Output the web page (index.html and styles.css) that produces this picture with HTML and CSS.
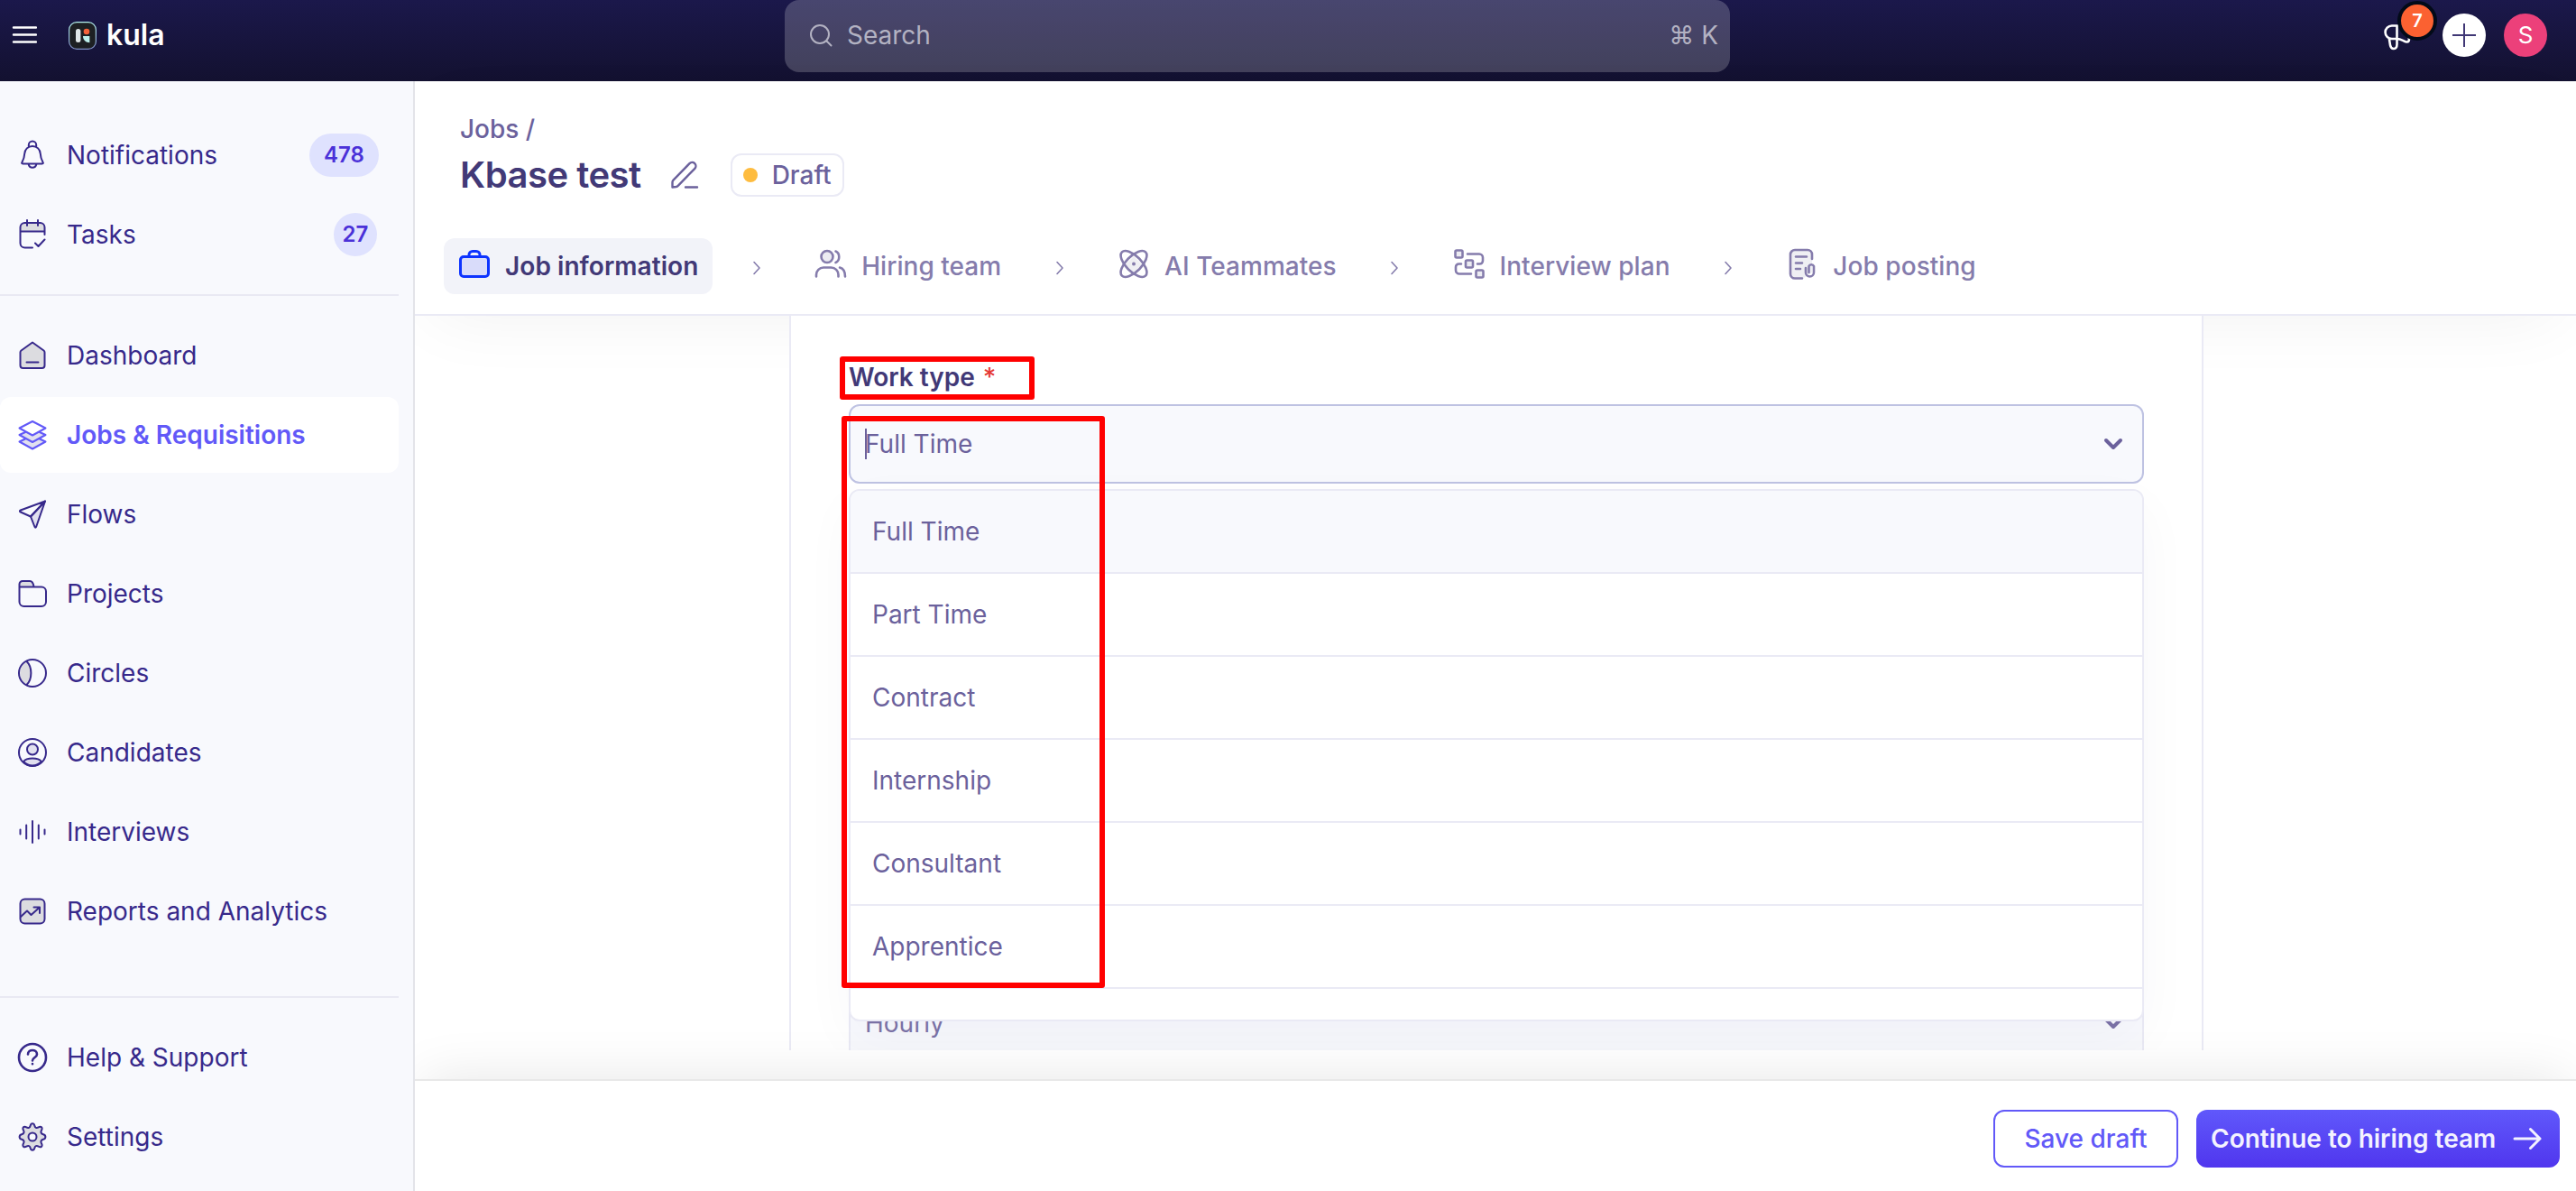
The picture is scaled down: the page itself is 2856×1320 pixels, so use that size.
FILE: index.html
```html
<!DOCTYPE html>
<html lang="en">
<head>
    <meta charset="UTF-8">
    <meta name="viewport" content="width=device-width, initial-scale=1.0">
    <title>Kbase test - Job information</title>

    <link rel="stylesheet" href="styles.css">
</head>
<body>
    <!-- Top Bar -->
    <header class="topbar">
        <div class="brand">
            <svg class="menu-icon" width="28" height="24" viewBox="0 0 28 24"><path d="M2 3.5h25M2 11.5h25M2 19.5h25"/></svg>
            <svg class="logo" width="31" height="31" viewBox="0 0 31 31">
                <defs>
                    <linearGradient id="ring" x1="0" y1="0" x2="0" y2="1">
                        <stop offset="0" stop-color="#b5f3f0"/>
                        <stop offset="1" stop-color="#7f8fc8"/>
                    </linearGradient>
                </defs>
                <rect x=".6" y=".6" width="29.8" height="29.8" rx="8.5" fill="#1d2023" stroke="url(#ring)" stroke-width="1.2"/>
                <rect x="8" y="8" width="5.4" height="15" rx="2.5" fill="#dfe6e8"/>
                <circle cx="20" cy="11" r="3.3" fill="#f4623a"/>
                <path d="M16 16h7.4v7.2c-4 0-7.4-2.600-7.400-7.200z" fill="#bdf0ec"/>
            </svg>
            <span class="brand-name">kula</span>
        </div>
        <div class="search">
            <svg width="26" height="26" viewBox="0 0 26 26"><circle cx="12" cy="12" r="10"/><path d="M19.500 19.500l5 5"/></svg>
            <span class="search-text">Search</span>
            <span class="shortcut">⌘ K</span>
        </div>
        <div class="actions">
            <div class="announce">
                <svg width="32" height="32" viewBox="0 0 32 32"><path d="M15.500 2.500H9.800a7.200 7.200 0 0 0 0 14.500h5.700zM15.500 17v6c0 6.500-6.500 6.500-7.500 1L6.800 16.500M15.500 17c5 0 7 3 10.500 3.500 2.500.3 3.300-1.500 2.800-4M15.500 2.500c4 0 6-1 8-2.500"/></svg>
                <span class="count">7</span>
            </div>
            <div class="circle plus">
                <svg width="26" height="26" viewBox="0 0 26 26"><path d="M13 .5v25M.5 13h25"/></svg>
            </div>
            <div class="circle avatar">S</div>
        </div>
    </header>

    <div class="page">
        <!-- Sidebar Menu -->
        <nav class="sidebar">
            <ul>
                <li>
                    <svg class="icon" viewBox="0 0 36 36"><path d="M13.800 9V6.800a4.200 4.200 0 0 1 8.400 0V9M18 8c-5 0-8.500 3.500-8.800 8.500-.2 4.500-1.200 6.500-2.700 9.200-.8 1.400-.3 1.700.7 1.700h21.600c1 0 1.500-.3.7-1.700-1.500-2.700-2.500-4.700-2.700-9.200C26.500 11.500 23 8 18 8zM13.600 28c.6 2.500 2.200 3.800 4.400 3.800s3.800-1.300 4.400-3.800"/></svg>
                    <span>Notifications</span>
                    <span class="badge">478</span>
                </li>
                <li>
                    <svg class="icon" viewBox="0 0 36 36"><path class="shade" d="M4.500 14.500V10a5 5 0 0 1 5-5h17a5 5 0 0 1 5 5v4.500z"/><path d="M18 32.500H9.500a5 5 0 0 1-5-5V10a5 5 0 0 1 5-5h17a5 5 0 0 1 5 5v8M4.500 14.500h27M12 2v6M24 2v6M21 27.500l3.500 3.500 7-7.500"/></svg>
                    <span>Tasks</span>
                    <span class="badge round">27</span>
                </li>
            </ul>
            <hr>
            <ul class="main-links">
                <li>
                    <svg class="icon" viewBox="0 0 36 36"><path class="shade" d="M18 3.500L5.500 12.500a2.500 2.500 0 0 0-1 2V29a3 3 0 0 0 3 3h21a3 3 0 0 0 3-3V14.500a2.500 2.500 0 0 0-1-2z"/><path d="M18 3.500L5.500 12.500a2.500 2.500 0 0 0-1 2V29a3 3 0 0 0 3 3h21a3 3 0 0 0 3-3V14.500a2.500 2.500 0 0 0-1-2zM11.500 25.500h13"/></svg>
                    <span>Dashboard</span>
                </li>
                <li class="active">
                    <svg class="icon" viewBox="0 0 36 36"><path d="M10 22.500l-6.500 3L18 33.500l14.500-8-6.500-3" class="tint"/><path d="M10 15l-6.500 3L18 26l14.500-8-6.500-3" class="tint"/><path d="M18 3L3.500 10.500 18 18.500l14.500-8z" class="white"/></svg>
                    <span>Jobs &amp; Requisitions</span>
                </li>
                <li>
                    <svg class="icon" viewBox="0 0 36 36"><path class="tint" d="M32 3.500L16 20.500 20.500 32c.4 1 1.200 1 1.600 0z"/><path d="M32 3.500L4.800 13.500c-1.200.5-1.200 1.500 0 2L16 20.500zM32 3.500L16 20.500"/></svg>
                    <span>Flows</span>
                </li>
                <li>
                    <svg class="icon" viewBox="0 0 36 36"><path class="shade" d="M3.500 11V7.500a3.500 3.500 0 0 1 3.500-3.500h8c3 0 4.500 3 4.800 7z"/><path d="M3.500 11V7.500a3.500 3.500 0 0 1 3.500-3.500h8c2.500 0 4 2.500 4.600 6.500M3.500 10.500H28a5 5 0 0 1 5 5V27a5 5 0 0 1-5 5H8.500a5 5 0 0 1-5-5z"/></svg>
                    <span>Projects</span>
                </li>
                <li>
                    <svg class="icon" viewBox="0 0 36 36"><path class="shade" d="M11.500 5.500c6.500 6 6.500 19 0 25-9.500-5-9.500-20 0-25z"/><circle cx="18" cy="18" r="15"/><path d="M11.500 5c6.500 6 6.500 20 0 26"/></svg>
                    <span>Circles</span>
                </li>
                <li>
                    <svg class="icon" viewBox="0 0 36 36"><path class="tint" d="M8 28c2-2.700 5-3.500 10-3.500s8 .8 10 3.500c-5 6-15 6-20 0z"/><circle class="tint" cx="18" cy="14.500" r="6"/><circle cx="18" cy="18" r="15"/></svg>
                    <span>Candidates</span>
                </li>
                <li>
                    <svg class="icon" viewBox="0 0 36 36"><path d="M4.500 15.500v5M11.200 10.500v15M18 6v24M24.800 10.500v15M31.500 15.500v5"/></svg>
                    <span>Interviews</span>
                </li>
                <li>
                    <svg class="icon" viewBox="0 0 36 36"><rect class="shade" x="4.500" y="4.500" width="27" height="27" rx="5"/><rect x="4.500" y="4.500" width="27" height="27" rx="5"/><path d="M5 24l7-6.500 4.500 4.500L25.500 14M19.500 13.500H26V20"/></svg>
                    <span>Reports and Analytics</span>
                </li>
            </ul>
            <hr>
            <ul class="bottom-links">
                <li>
                    <svg class="icon bold" viewBox="0 0 36 36"><circle cx="18" cy="18" r="15"/><path d="M13 14.500c0-6 10-6 10 0 0 3.500-5 3.500-5 7M18 25v.2"/></svg>
                    <span>Help &amp; Support</span>
                </li>
                <li>
                    <svg class="icon" viewBox="0 0 36 36"><path class="gear" d="M15.700 5.500c.7-3 3.900-3 4.600 0 .5 2.400 2.300 3.200 4.400 1.900 2.800-1.700 4.900.4 3.300 3.300-1.200 2.100-.4 3.900 2 4.500 3.200.8 3.200 4.800 0 5.600-2.400.6-3.200 2.400-2 4.500 1.600 2.900-.5 5-3.300 3.300-2.100-1.300-3.900-.5-4.400 1.900-.7 3-3.900 3-4.600 0-.5-2.400-2.300-3.200-4.400-1.900-2.800 1.700-4.900-.4-3.300-3.300 1.200-2.100.4-3.900-2-4.500-3.200-.8-3.200-4.800 0-5.600 2.400-.6 3.200-2.400 2-4.500-1.600-2.900.5-5 3.300-3.300 2.100 1.300 3.900.5 4.400-1.900z"/><circle cx="18" cy="18" r="4.500" class="hole"/></svg>
                    <span>Settings</span>
                </li>
            </ul>
        </nav>

        <main class="content">
            <!-- Job Header -->
            <section class="job-header">
                <div class="breadcrumb">Jobs /</div>
                <div class="title-row">
                    <h1>Kbase test</h1>
                    <svg class="edit" width="32" height="32" viewBox="0 0 32 32"><path d="M2.500 29.500v-5.500c0-1 .2-1.500 1-2.300L21.500 3.200a4 4 0 0 1 5.800 5.600L9 27.600c-.8.8-1.300 1.200-2.300 1.400zM17 29.500h13"/></svg>
                    <span class="status"><i></i>Draft</span>
                </div>
                <div class="steps">
                    <div class="step current">
                        <svg viewBox="0 0 36 36"><rect class="fill" x="2.500" y="9.500" width="31" height="22" rx="3.500"/><path d="M12 9V7.500a4 4 0 0 1 4-4h4a4 4 0 0 1 4 4V9"/></svg>
                        <span>Job information</span>
                    </div>
                    <svg class="arrow" width="10" height="16" viewBox="0 0 10 16"><path d="M2 1.500l6 6.500-6 6.500"/></svg>
                    <div class="step">
                        <svg viewBox="0 0 36 36"><circle class="fill" cx="14" cy="9.500" r="6.500"/><path d="M2 31.500v-2a8 8 0 0 1 8-8h8.500a8 8 0 0 1 8 8v2M23.500 3.500c5 2 5 10.500 0 12.500M28 21.500c4 1 6 4 6 10"/></svg>
                        <span>Hiring team</span>
                    </div>
                    <svg class="arrow" width="10" height="16" viewBox="0 0 10 16"><path d="M2 1.500l6 6.500-6 6.500"/></svg>
                    <div class="step">
                        <svg viewBox="0 0 36 36"><path class="soft" d="M18 9l9 9-9 9-9-9z"/><ellipse cx="18" cy="17.500" rx="18.500" ry="8.500" transform="rotate(45 18 17.500)"/><ellipse cx="18" cy="17.500" rx="18.500" ry="8.500" transform="rotate(-45 18 17.500)"/><path d="M18 17.400v.2" class="dot"/></svg>
                        <span>AI Teammates</span>
                    </div>
                    <svg class="arrow" width="10" height="16" viewBox="0 0 10 16"><path d="M2 1.500l6 6.500-6 6.500"/></svg>
                    <div class="step">
                        <svg viewBox="0 0 36 36"><rect class="fill" x="2.500" y="2.500" width="8" height="8" rx="1.500"/><rect class="fill" x="14" y="13.500" width="8" height="8" rx="1.500"/><rect class="fill" x="25.500" y="24.500" width="8" height="8" rx="1.500"/><path d="M16 6.500h13a4 4 0 0 1 4 4v3.500a3.500 3.500 0 0 1-3.500 3.500H27M9 17.500H6.500a3.500 3.500 0 0 0-3.500 3.500v3.500a4 4 0 0 0 4 4h13"/></svg>
                        <span>Interview plan</span>
                    </div>
                    <svg class="arrow" width="10" height="16" viewBox="0 0 10 16"><path d="M2 1.500l6 6.500-6 6.500"/></svg>
                    <div class="step">
                        <svg viewBox="0 0 36 36"><path class="soft" d="M5 7a5 5 0 0 1 5-5h14a5 5 0 0 1 5 5v20l-9 6H10a5 5 0 0 1-5-5z"/><path d="M18 33.500h-8a5 5 0 0 1-5-5V7a5 5 0 0 1 5-5h14a5 5 0 0 1 5 5v5M11 9.500h12M11 16.500h7M11 23h5M22 22v5a4.500 4.500 0 0 0 9 0v-7a3 3 0 0 0-5.500 0v7"/></svg>
                        <span>Job posting</span>
                    </div>
                </div>
            </section>

            <!-- Form -->
            <section class="form-area">
                <div class="card">
                    <div class="work-type">
                        <label>Work type <em>*</em></label>
                        <div class="select focused">
                            <span class="caret"></span>
                            <span>Full Time</span>
                            <svg width="22" height="14" viewBox="0 0 22 14"><path d="M3 3l8 8 8-8"/></svg>
                        </div>
                        <ul class="options">
                            <li class="hovered">Full Time</li>
                            <li>Part Time</li>
                            <li>Contract</li>
                            <li>Internship</li>
                            <li>Consultant</li>
                            <li>Apprentice</li>
                        </ul>
                        <div class="mark mark-label"></div>
                        <div class="mark mark-options"></div>
                    </div>
                    <div class="select pay">
                        <span>Hourly</span>
                        <svg width="22" height="14" viewBox="0 0 22 14"><path d="M3 3l8 8 8-8"/></svg>
                    </div>
                </div>
            </section>

            <!-- Footer Buttons -->
            <footer>
                <button class="outline">Save draft</button>
                <button class="primary">Continue to hiring team
                    <svg width="32" height="26" viewBox="0 0 32 26"><path d="M2 13h28M19.500 2.500L30 13 19.500 23.500"/></svg>
                </button>
            </footer>
        </main>
    </div>
</body>
</html>
```
FILE: styles.css
```css
* {
    box-sizing: border-box;
}
body {
    font-family: Inter, "Liberation Sans", sans-serif;
    font-size: 28px;
    line-height: 40px;
    margin: 0;
    height: 1320px;
    overflow: hidden;
    background-color: #fff;
}
ul {
    list-style: none;
    margin: 0;
    padding: 0;
}
svg {
    fill: none;
    stroke: currentColor;
    stroke-width: 2;
    stroke-linecap: round;
    stroke-linejoin: round;
    flex-shrink: 0;
}

/* Top Bar */
.topbar {
    height: 90px;
    display: grid;
    grid-template-columns: 870px 1048px 1fr;
    background: linear-gradient(#1b184b, #131130);
    color: #fff;
}
.brand {
    display: flex;
    align-items: center;
    height: 78px;
    padding-left: 13px;
}
.menu-icon {
    stroke-width: 2.4;
}
.logo {
    margin-left: 35px;
    stroke: none;
}
.brand-name {
    margin-left: 11px;
    font-size: 32px;
    font-weight: 600;
}
.search {
    display: flex;
    align-items: center;
    height: 80px;
    padding: 0 13px 2px 27px;
    border-radius: 16px;
    background-color: rgba(255, 255, 255, 0.2);
    color: #b3b2c2;
}
.search-text {
    margin-left: 16px;
}
.shortcut {
    margin-left: auto;
}
.actions {
    display: flex;
    align-items: center;
    justify-content: flex-end;
    gap: 20px;
    height: 78px;
    padding-right: 32px;
}
.announce {
    position: relative;
    margin-right: 14px;
    height: 26px;
}
.announce svg {
    display: block;
    stroke-width: 2.6;
}
.count {
    position: absolute;
    left: 16px;
    top: -25px;
    width: 44px;
    height: 44px;
    border: 4px solid #020a18;
    border-radius: 50%;
    background-color: #fb6131;
    font-size: 20px;
    font-weight: 600;
    line-height: 36px;
    text-align: center;
}
.circle {
    width: 48px;
    height: 48px;
    border-radius: 50%;
    display: flex;
    align-items: center;
    justify-content: center;
}
.plus {
    background-color: #fff;
    color: #403775;
}
.avatar {
    background-color: #ec407a;
    font-size: 26px;
}

.page {
    display: flex;
    height: 1230px;
}

/* Sidebar Menu */
.sidebar {
    position: relative;
    z-index: 1;
    width: 460px;
    padding: 40px 16px 0 0;
    background-color: #f8f9fd;
    border-right: 2px solid #e3e4e9;
    color: #37298b;
}
.sidebar ul {
    display: flex;
    flex-direction: column;
    gap: 4px;
}
.sidebar li {
    height: 84px;
    display: flex;
    align-items: center;
    padding: 0 22px 0 18px;
    border-radius: 12px;
}
.sidebar hr {
    height: 2px;
    margin: 24px 0;
    border: none;
    background-color: #e9e9f3;
}
.sidebar .main-links {
    height: 700px;
    margin-bottom: 52px;
}
.sidebar .bottom-links {
    margin-top: 24px;
}
.icon {
    width: 36px;
    height: 36px;
    margin-right: 20px;
}
.bold {
    stroke-width: 2.6;
}
.shade {
    fill: #dcdce0;
    stroke: none;
}
.tint {
    fill: #e1e0ef;
}
.white {
    fill: #fff;
}
.gear {
    fill: #dcdce0;
}
.hole {
    fill: #f8f9fd;
}
.sidebar .active {
    background-color: #fff;
    color: #6259f8;
    font-weight: 600;
}
.badge {
    min-width: 77px;
    height: 48px;
    margin-left: auto;
    border-radius: 24px;
    background-color: #dfe2fe;
    color: #4a31d8;
    font-size: 24px;
    font-weight: 600;
    line-height: 47px;
    text-align: center;
}
.badge.round {
    min-width: 48px;
    margin-right: 2px;
}

/* Job Header */
.content {
    flex: 1;
    display: flex;
    flex-direction: column;
}
.job-header {
    height: 260px;
    padding: 33px 32px 0;
    border-bottom: 2px solid #eaeaf5;
    box-shadow: 0 20px 80px -20px rgba(0, 0, 0, 0.06);
    color: #6b619c;
}
.breadcrumb {
    padding-left: 18px;
    font-weight: 500;
}
.title-row {
    display: flex;
    align-items: center;
    height: 48px;
    margin-top: 7px;
    padding-left: 18px;
}
h1 {
    margin: 0;
    color: #423977;
    font-size: 40px;
    font-weight: 600;
    letter-spacing: -0.5px;
}
.edit {
    margin-left: 32px;
    stroke-width: 2.4;
}
.status {
    display: flex;
    align-items: center;
    height: 48px;
    margin-left: 35px;
    padding: 0 12px;
    border: 2px solid #eaeaf5;
    border-radius: 12px;
    font-weight: 500;
}
.status i {
    width: 16px;
    height: 16px;
    margin-right: 16px;
    border-radius: 50%;
    background-color: #febc3f;
}
.steps {
    display: flex;
    align-items: center;
    gap: 43.4px;
    margin-top: 46px;
    color: #857cac;
    letter-spacing: 0.05px;
}
.step {
    display: flex;
    align-items: center;
    gap: 16px;
    height: 62px;
    padding: 0 16px;
    border-radius: 12px;
    font-weight: 500;
}
.step svg {
    width: 36px;
    height: 36px;
    margin-top: -5px;
    stroke-width: 2.6;
}
.step .fill {
    fill: #ececf2;
}
.step .soft {
    fill: #efeff3;
    stroke: none;
}
.step .dot {
    stroke-width: 4;
}
.step.current {
    background-color: #f2f3f9;
    color: #423977;
    font-weight: 600;
}
.step.current svg {
    color: #0d33ff;
    stroke-width: 3;
}
.step.current .fill {
    fill: #d9dcfa;
}
.arrow {
    margin-top: 4px;
    stroke-width: 1.6;
}

/* Form */
.form-area {
    height: 814px;
    overflow: hidden;
    position: relative;
    z-index: 0;
}
.card {
    width: 1568px;
    height: 900px;
    margin-left: 415px;
    padding: 48px 64px;
    border: solid #eaeaf5;
    border-width: 0 2px;
    background-color: #fff;
}
.work-type {
    position: relative;
    height: 692px;
}
label {
    display: block;
    height: 50px;
    color: #423977;
    font-weight: 600;
}
label em {
    color: #e53935;
    font-style: normal;
    font-weight: 500;
    margin-left: 2px;
}
.select {
    height: 88px;
    display: flex;
    align-items: center;
    padding: 0 21px 0 16px;
    border: 2px solid #eaeaf5;
    border-radius: 12px;
    background-color: #f8f9fd;
    color: #6b619c;
}
.select svg {
    margin-left: auto;
    stroke-width: 4;
}
.select.focused {
    border-color: #bec2e2;
}
.caret {
    width: 2px;
    height: 34px;
    margin-right: -2px;
    background-color: #6b619c;
}
.pay {
    color: #7d74a8;
}
.options {
    position: absolute;
    z-index: 1;
    top: 144px;
    left: 0;
    width: 100%;
    height: 590px;
    overflow: hidden;
    border: 2px solid #eaeaf5;
    border-radius: 12px;
    background-color: #fff;
    box-shadow: 0 20px 60px rgba(40, 35, 90, 0.035);
    color: #6b619c;
}
.options li {
    height: 92px;
    padding: 25px 24px;
    border-bottom: 2px solid #eaeaf5;
}
.options .hovered {
    background-color: #f8f9fd;
}

/* Red highlight boxes */
.mark {
    position: absolute;
    z-index: 2;
    border: 6px solid #f00;
    border-radius: 3px;
}
.mark-label {
    left: -10px;
    top: -3px;
    width: 216px;
    height: 48px;
}
.mark-options {
    left: -8px;
    top: 63px;
    width: 292px;
    height: 634px;
}

/* Footer Buttons */
footer {
    position: relative;
    display: flex;
    justify-content: flex-end;
    gap: 20px;
    height: 124px;
    margin-top: 32px;
    padding: 32px 18px 0 0;
    border-top: 2px solid #e8e8e8;
    background-color: #fff;
    box-shadow: 0 -10px 60px -10px rgba(0, 0, 0, 0.1);
}
button {
    height: 64px;
    display: flex;
    align-items: center;
    border-radius: 12px;
    font-family: inherit;
    font-size: 28px;
    font-weight: 500;
}
.outline {
    width: 205px;
    justify-content: center;
    border: 2px solid #6259f8;
    background-color: #fff;
    color: #6259f8;
}
.primary {
    width: 403px;
    padding: 0 20px 0 16px;
    justify-content: space-between;
    border: none;
    background: linear-gradient(#6058fb, #5036ee);
    color: #f3f2ff;
    font-weight: 600;
}
.primary svg {
    stroke-width: 3;
}
```
